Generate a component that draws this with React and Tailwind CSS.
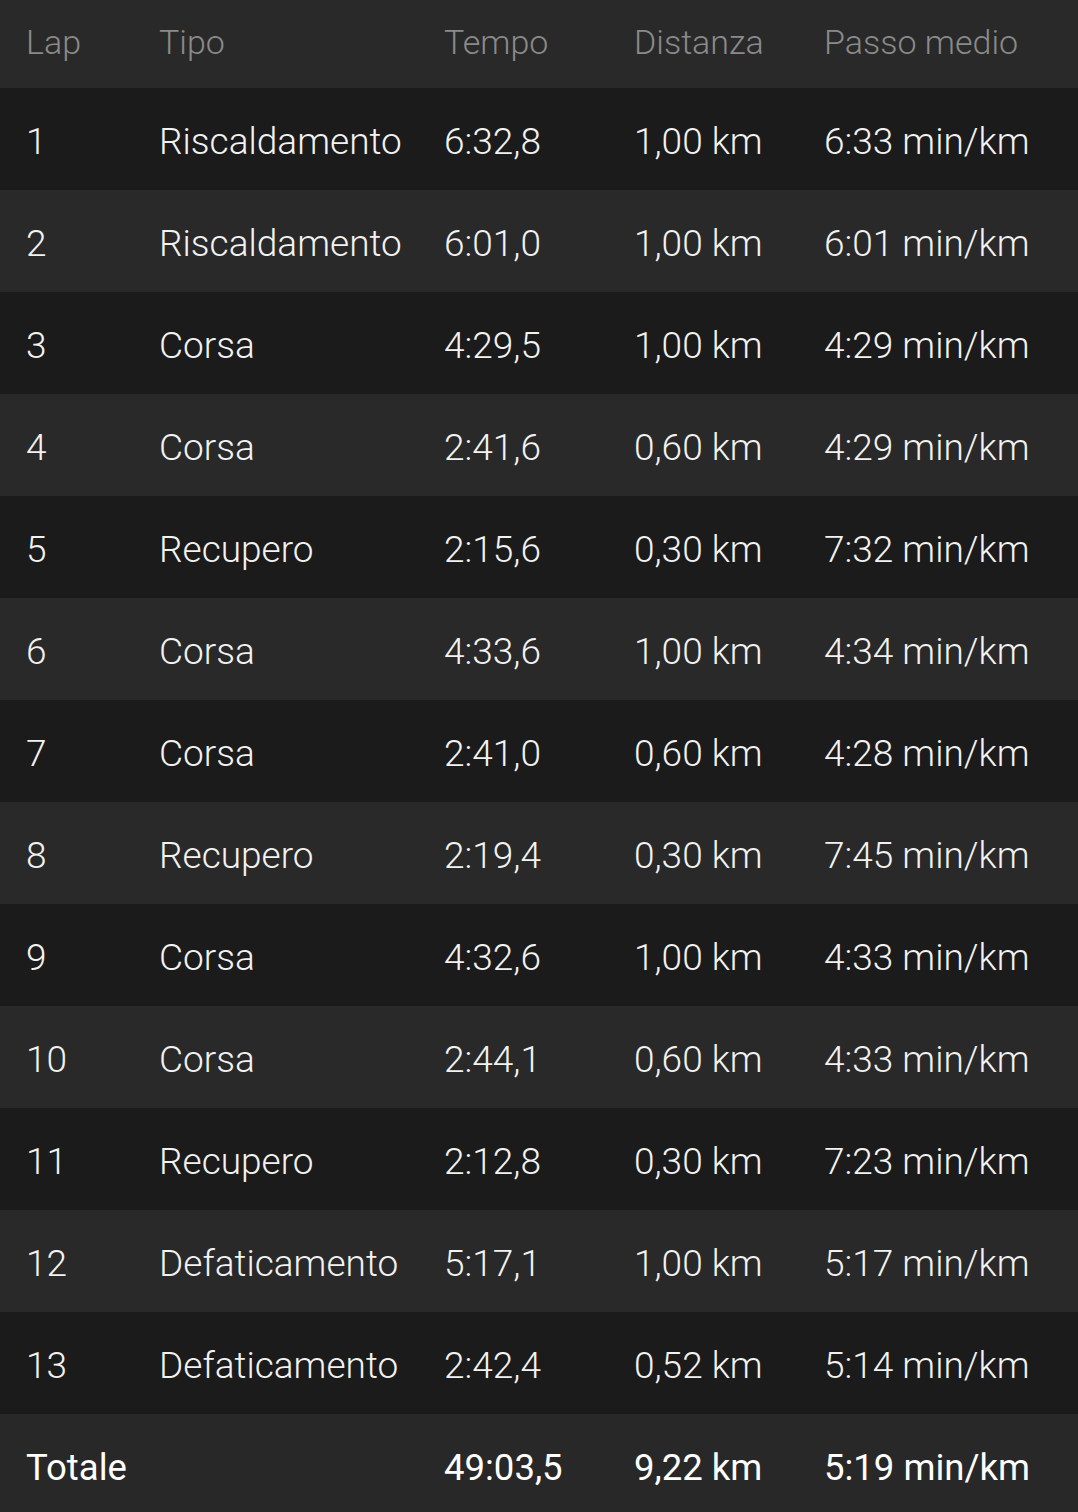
import React from "react";

const rows = [
  ["1", "Riscaldamento", "6:32,8", "1,00 km", "6:33 min/km"],
  ["2", "Riscaldamento", "6:01,0", "1,00 km", "6:01 min/km"],
  ["3", "Corsa", "4:29,5", "1,00 km", "4:29 min/km"],
  ["4", "Corsa", "2:41,6", "0,60 km", "4:29 min/km"],
  ["5", "Recupero", "2:15,6", "0,30 km", "7:32 min/km"],
  ["6", "Corsa", "4:33,6", "1,00 km", "4:34 min/km"],
  ["7", "Corsa", "2:41,0", "0,60 km", "4:28 min/km"],
  ["8", "Recupero", "2:19,4", "0,30 km", "7:45 min/km"],
  ["9", "Corsa", "4:32,6", "1,00 km", "4:33 min/km"],
  ["10", "Corsa", "2:44,1", "0,60 km", "4:33 min/km"],
  ["11", "Recupero", "2:12,8", "0,30 km", "7:23 min/km"],
  ["12", "Defaticamento", "5:17,1", "1,00 km", "5:17 min/km"],
  ["13", "Defaticamento", "2:42,4", "0,52 km", "5:14 min/km"],
];

const headers = ["Lap", "Tipo", "Tempo", "Distanza", "Passo medio"];

export default function App() {
  return (
    <div
      className="w-[1078px] h-[1512px] bg-[#1b1b1b] overflow-hidden"
      style={{ fontFamily: "Roboto, 'Liberation Sans', sans-serif" }}
    >
      <div className="grid grid-cols-[159px_285px_190px_190px_1fr] items-center h-[88px] pb-[4px] bg-[#292929] text-[#8a8a8a] text-[34px] font-light">
        {headers.map((h, j) => (
          <div key={j} className={j === 0 ? "pl-[26px]" : ""}>
            {h}
          </div>
        ))}
      </div>
      {rows.map((r, i) => (
        <div
          key={i}
          className={`grid grid-cols-[159px_285px_190px_190px_1fr] items-center h-[102px] pt-[5px] text-[37px] font-light text-[#f2f2f2] ${
            i % 2 === 0 ? "bg-[#1b1b1b]" : "bg-[#292929]"
          }`}
        >
          {r.map((c, j) => (
            <div key={j} className={j === 0 ? "pl-[26px]" : ""}>
              {c}
            </div>
          ))}
        </div>
      ))}
      <div className="grid grid-cols-[159px_285px_190px_190px_1fr] items-center h-[98px] pt-[11px] bg-[#282828] text-[36.5px] font-normal text-white">
        <div className="pl-[26px] col-span-2">Totale</div>
        <div>49:03,5</div>
        <div>9,22 km</div>
        <div>5:19 min/km</div>
      </div>
    </div>
  );
}
